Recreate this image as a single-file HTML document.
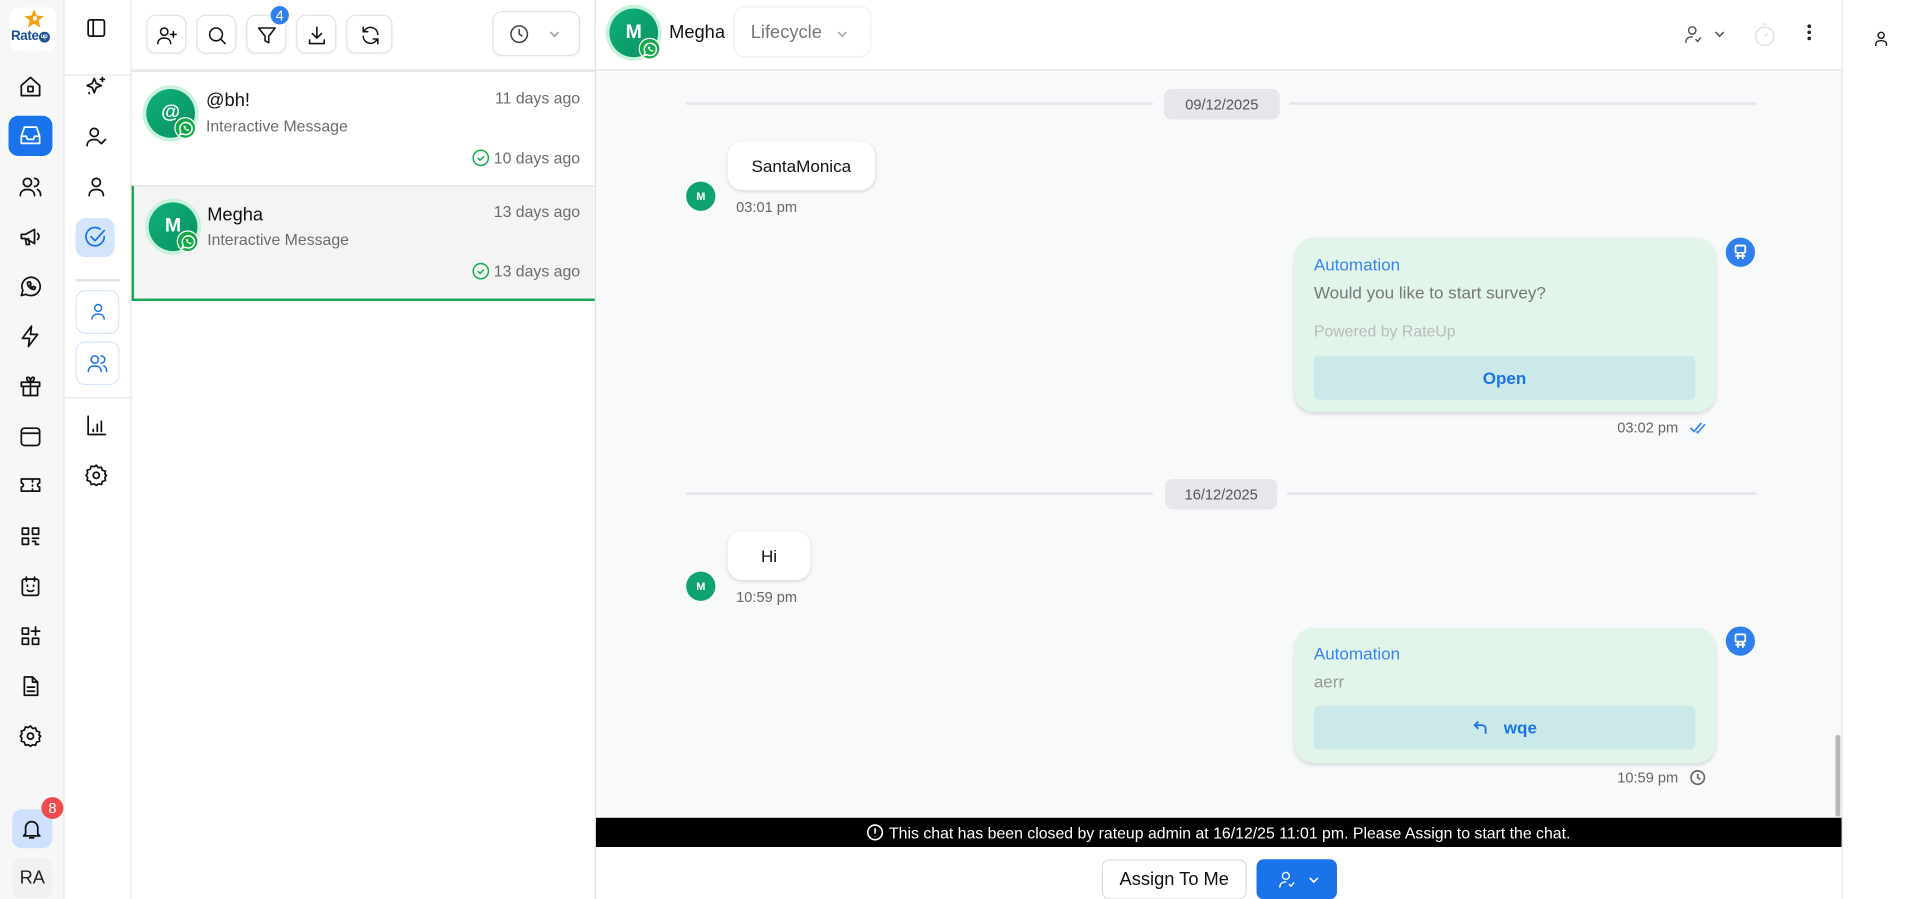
<!DOCTYPE html>
<html><head><meta charset="utf-8">
<style>
*{box-sizing:border-box;margin:0;padding:0}
html,body{width:1911px;height:899px;overflow:hidden;background:#fff;font-family:"Liberation Sans",Arial,sans-serif}
#w{position:absolute;left:0;top:0;width:1568px;height:738px;transform:scale(1.21875);transform-origin:0 0}
.a{position:absolute}
svg{display:block}
.ic{position:absolute;width:20px;height:20px;fill:none;stroke:#111;stroke-width:1.7;stroke-linecap:round;stroke-linejoin:round}
.btn{position:absolute;top:12px;width:33px;height:32px;border:1px solid #e3e3e3;border-radius:8px;background:#fff;box-shadow:0 1px 2px rgba(0,0,0,.05)}
.btn svg{position:absolute;left:7px;top:7px;width:18px;height:18px;fill:none;stroke:#111;stroke-width:1.7;stroke-linecap:round;stroke-linejoin:round}
.av{position:absolute;border-radius:50%;background:linear-gradient(135deg,#0fb07a,#0a9060);color:#fff;font-weight:bold;display:flex;align-items:center;justify-content:center;box-shadow:0 0 0 3px #c9f2dc}
.wa{position:absolute;width:18px;height:18px;border-radius:50%;background:#14a84a;border:1.5px solid #fff}
.wa svg{width:15px;height:15px;margin:0.5px}
.gray{color:#6b6b6b}
.card{position:absolute;left:1062px;width:346px;background:#e1f5ea;border-radius:16px;box-shadow:0 2px 3px rgba(0,0,0,.12)}
.auto{position:absolute;left:16px;color:#3b82f6;font-size:14px}
.cbtn{position:absolute;left:16px;width:313px;height:36px;background:#cce9e9;border-radius:4px;color:#1a73e8;font-weight:bold;font-size:14px;display:flex;align-items:center;justify-content:center}
.robot{position:absolute;width:24px;height:24px;border-radius:50%;background:#2f80ed}
.pill{position:absolute;height:25px;background:#e5e7eb;border-radius:6px;color:#555;font-size:12px;display:flex;align-items:center;justify-content:center}
.hl{position:absolute;height:2px;background:#e2e4e8}
.bub{position:absolute;left:597px;height:40px;background:#fff;border-radius:12px;box-shadow:0 1px 3px rgba(0,0,0,.15);font-size:14px;color:#111;display:flex;align-items:center;justify-content:center}
.sm{position:absolute;width:24px;height:24px;border-radius:50%;background:#0ea371;color:#fff;font-size:9px;font-weight:bold;display:flex;align-items:center;justify-content:center}
.t{position:absolute;font-size:12px;color:#666}
</style></head><body><div id="w">

<!-- rail 1 -->
<div class="a" style="left:0;top:0;width:53px;height:738px;background:#f7f7f7;border-right:1px solid #e6e6e6"></div>
<div class="a" style="left:8px;top:6px;width:38px;height:36px;background:#fff;border-radius:8px">
 <svg class="a" style="left:11px;top:1px" width="18" height="16" viewBox="0 0 24 22"><path d="M12 1l3 7 8 .5-6 5 2 8-7-4.5-7 4.5 2-8-6-5 8-.5z" fill="#f59e0b"/><circle cx="13" cy="11" r="2.5" fill="#fff"/></svg>
 <div class="a" style="left:1px;top:18px;font-size:11px;color:#1e4f91;font-weight:bold;letter-spacing:-.3px">Rate<span style="display:inline-block;width:9px;height:9px;border-radius:50%;background:#1e4f91;color:#fff;font-size:5px;text-align:center;line-height:9px;vertical-align:middle">up</span></div>
</div>
<svg class="ic" style="left:15px;top:61px" viewBox="0 0 24 24"><path d="M3 11l9-8 9 8v10H3z"/><rect x="9.5" y="12" width="5" height="5"/></svg>
<div class="a" style="left:7px;top:95px;width:36px;height:33px;background:#1a73e8;border-radius:8px"></div>
<svg class="ic" style="left:15px;top:101px;stroke:#fff" viewBox="0 0 24 24"><path d="M3 13l3-9h12l3 9v7H3z"/><path d="M3 13h5l1 3h6l1-3h5"/></svg>
<svg class="ic" style="left:15px;top:143px" viewBox="0 0 24 24"><circle cx="9" cy="8" r="4"/><path d="M2 21c0-4 3-6 7-6s7 2 7 6"/><path d="M16 4a4 4 0 010 8M19 15c2 1 3 3 3 6"/></svg>
<svg class="ic" style="left:15px;top:184px" viewBox="0 0 24 24"><path d="M3 10v4h4l9 5V5L7 10z"/><path d="M7 14l1 6h3l-1-6M19 9a4 4 0 010 6"/></svg>
<svg class="ic" style="left:15px;top:225px" viewBox="0 0 24 24"><path d="M3 21l1.5-5A9 9 0 1112 21a9 9 0 01-4.5-1.2z"/><path d="M9 8c0 4 3 7 7 7l1-2-2-1-1 1c-1-.5-2-1.5-2.5-2.5l1-1-1-2z"/></svg>
<svg class="ic" style="left:15px;top:266px" viewBox="0 0 24 24"><path d="M13 2L4 14h7l-1 8 9-12h-7z"/></svg>
<svg class="ic" style="left:15px;top:307px" viewBox="0 0 24 24"><rect x="3" y="8" width="18" height="4"/><path d="M5 12v9h14v-9M12 8v13M12 8C9 8 7 3 9.5 3S12 8 12 8s0-5 2.5-5S15 8 12 8"/></svg>
<svg class="ic" style="left:15px;top:348px" viewBox="0 0 24 24"><rect x="3" y="4" width="18" height="17" rx="3"/><path d="M3 9h18"/></svg>
<svg class="ic" style="left:15px;top:388px" viewBox="0 0 24 24"><path d="M3 6h18v4a2 2 0 000 4v4H3v-4a2 2 0 000-4z"/><path d="M14 7v2M14 12v1M14 16v1"/></svg>
<svg class="ic" style="left:15px;top:430px" viewBox="0 0 24 24"><rect x="4" y="4" width="6" height="6"/><rect x="14" y="4" width="6" height="6"/><rect x="4" y="14" width="6" height="6"/><path d="M14 14h6M14 17h3v3h3"/></svg>
<svg class="ic" style="left:15px;top:471px" viewBox="0 0 24 24"><rect x="4" y="5" width="16" height="16" rx="2"/><path d="M8 3v4M16 3v4M9 16c2 1.5 4 1.5 6 0M9 11v1M15 11v1"/></svg>
<svg class="ic" style="left:15px;top:512px" viewBox="0 0 24 24"><rect x="4" y="4" width="6" height="6"/><rect x="4" y="14" width="6" height="6"/><rect x="14" y="14" width="6" height="6"/><path d="M17 3v8M13 7h8"/></svg>
<svg class="ic" style="left:15px;top:553px" viewBox="0 0 24 24"><path d="M6 3h8l5 5v13H6z"/><path d="M14 3v5h5M9 13h7M9 17h7"/></svg>
<svg class="ic" style="left:15px;top:594px" viewBox="0 0 24 24"><circle cx="12" cy="12" r="3"/><path d="M12 2l2 2.5 3-.5 1 3 3 1-.5 3L22 12l-1.5 2 .5 3-3 1-1 3-3-.5L12 22l-2-1.5-3 .5-1-3-3-1 .5-3L2 12l1.5-2L3 7l3-1 1-3 3 .5z"/></svg>
<div class="a" style="left:10px;top:664px;width:33px;height:32px;background:#cfe0ff;border-radius:8px"></div>
<svg class="ic" style="left:16px;top:670px" viewBox="0 0 24 24"><path d="M6 17V11a6 6 0 0112 0v6l2 2H4zM10 21h4"/></svg>
<div class="a" style="left:34px;top:654px;width:18px;height:18px;border-radius:50%;background:#f04b4b;color:#fff;font-size:12px;text-align:center;line-height:18px">8</div>
<div class="a" style="left:10px;top:704px;width:33px;height:33px;background:#f1f1f1;border-radius:8px;font-size:15px;color:#222;text-align:center;line-height:33px">RA</div>

<!-- rail 2 -->
<div class="a" style="left:53px;top:0;width:55px;height:738px;background:#fff;border-right:1px solid #e6e6e6"></div>
<div class="a" style="left:53px;top:61px;width:54px;height:1px;background:#e6e6e6"></div>
<svg class="ic" style="left:69px;top:13px" viewBox="0 0 24 24"><rect x="4" y="4" width="16" height="16" rx="2"/><path d="M9 4v16"/></svg>
<svg class="ic" style="left:69px;top:61px" viewBox="0 0 24 24"><path d="M10 4l2 5 5 2-5 2-2 5-2-5-5-2 5-2z"/><path d="M18 3v4M16 5h4M5 18v1"/></svg>
<svg class="ic" style="left:69px;top:102px" viewBox="0 0 24 24"><circle cx="10" cy="8" r="4"/><path d="M3 21c0-4 3-6 7-6 2 0 3 .4 4 1M15 17l2 2 4-4"/></svg>
<svg class="ic" style="left:69px;top:143px" viewBox="0 0 24 24"><circle cx="12" cy="8" r="4"/><path d="M5 21c0-4 3-6 7-6s7 2 7 6"/></svg>
<div class="a" style="left:62px;top:179px;width:32px;height:32px;background:#d4e4fb;border-radius:8px"></div>
<svg class="ic" style="left:68px;top:185px;stroke:#1a73e8" viewBox="0 0 24 24"><path d="M21 11a9 9 0 11-4-7.5"/><path d="M8 11l4 4 9-10"/></svg>
<div class="a" style="left:62px;top:229px;width:36px;height:2px;background:#e2e2e2"></div>
<div class="a" style="left:62px;top:238px;width:36px;height:36px;border:1px solid #d8e6fb;border-radius:8px"></div>
<svg class="ic" style="left:72px;top:247px;width:17px;height:17px;stroke:#1a73e8" viewBox="0 0 24 24"><circle cx="12" cy="8" r="4"/><path d="M5 21c0-4 3-6 7-6s7 2 7 6"/></svg>
<div class="a" style="left:62px;top:280px;width:36px;height:36px;border:1px solid #d8e6fb;border-radius:8px"></div>
<svg class="ic" style="left:71px;top:289px;width:18px;height:18px;stroke:#1a73e8" viewBox="0 0 24 24"><circle cx="9" cy="8" r="4"/><path d="M2 21c0-4 3-6 7-6s7 2 7 6"/><path d="M16 4a4 4 0 010 8M19 15c2 1 3 3 3 6"/></svg>
<div class="a" style="left:53px;top:326px;width:54px;height:1px;background:#e6e6e6"></div>
<svg class="ic" style="left:69px;top:339px" viewBox="0 0 24 24"><path d="M4 3v18h17M9 16v2M13 11v7M17 8v10"/></svg>
<svg class="ic" style="left:69px;top:380px" viewBox="0 0 24 24"><circle cx="12" cy="12" r="3"/><path d="M12 2l2 2.5 3-.5 1 3 3 1-.5 3L22 12l-1.5 2 .5 3-3 1-1 3-3-.5L12 22l-2-1.5-3 .5-1-3-3-1 .5-3L2 12l1.5-2L3 7l3-1 1-3 3 .5z"/></svg>

<!-- list -->
<div class="a" style="left:108px;top:0;width:381px;height:738px;background:#fff;border-right:1px solid #e2e2e2"></div>
<div class="btn" style="left:120px"><svg viewBox="0 0 24 24"><circle cx="9" cy="8" r="4"/><path d="M2 21c0-4 3-6 7-6s7 2 7 6M19 8v6M16 11h6"/></svg></div>
<div class="btn" style="left:161px"><svg viewBox="0 0 24 24"><circle cx="11" cy="11" r="7"/><path d="M16 16l5 5"/></svg></div>
<div class="btn" style="left:202px"><svg viewBox="0 0 24 24"><path d="M3 4h18l-7 9v7l-4-2v-5z"/></svg></div>
<div class="a" style="left:221px;top:4px;width:17px;height:17px;border-radius:50%;background:#2f80ed;color:#fff;font-size:12px;text-align:center;line-height:17px;border:1px solid #fff">4</div>
<div class="btn" style="left:243px"><svg viewBox="0 0 24 24"><path d="M12 3v12M7 10l5 5 5-5M4 17v4h16v-4"/></svg></div>
<div class="btn" style="left:284px;width:38px"><svg style="left:10px" viewBox="0 0 24 24"><path d="M20 11a8 8 0 00-14-5L4 8M4 3v5h5M4 13a8 8 0 0014 5l2-2M20 21v-5h-5"/></svg></div>
<div class="a" style="left:404px;top:9px;width:72px;height:37px;border:1px solid #e3e3e3;border-radius:8px;box-shadow:0 1px 2px rgba(0,0,0,.04)">
 <svg class="a" style="left:12px;top:9px;width:18px;height:18px;fill:none;stroke:#444;stroke-width:1.7;stroke-linecap:round" viewBox="0 0 24 24"><circle cx="12" cy="12" r="9"/><path d="M12 7v5l3 2"/></svg>
 <svg class="a" style="left:45px;top:13px;width:10px;height:10px;fill:none;stroke:#aaa;stroke-width:2" viewBox="0 0 12 12"><path d="M2 4l4 4 4-4"/></svg>
</div>
<div class="a" style="left:108px;top:57px;width:380px;height:2px;background:#e6e6e6"></div>
<!-- item1 -->
<div class="av" style="left:120px;top:73px;width:40px;height:40px;font-size:16px">@</div>
<div class="wa" style="left:143px;top:96px"><svg viewBox="0 0 24 24" fill="none" stroke="#fff" stroke-width="2"><path d="M4 20l1.2-4A8 8 0 1112 20a8 8 0 01-4-1z"/><path d="M9 8.5c0 3.5 3 6.5 6.5 6.5l.8-1.6-1.8-.9-.9.9c-1-.5-2-1.4-2.4-2.4l.9-.9-.9-1.8z" fill="#fff" stroke="none"/></svg></div>
<div class="a" style="left:169px;top:74px;font-size:15px;color:#111">@bh!</div>
<div class="a gray" style="left:169px;top:96px;font-size:13px">Interactive Message</div>
<div class="a gray" style="left:400px;top:73px;width:76px;text-align:right;font-size:13px">11 days ago</div>
<svg class="a" style="left:387px;top:122px;width:15px;height:15px;fill:none;stroke:#16b04f;stroke-width:2" viewBox="0 0 24 24"><circle cx="12" cy="12" r="10"/><path d="M8 12l3 3 5-5"/></svg>
<div class="a gray" style="left:400px;top:122px;width:76px;text-align:right;font-size:13px">10 days ago</div>
<div class="a" style="left:108px;top:152px;width:380px;height:95px;background:#f4f4f4;border-left:2px solid #1aa354;border-bottom:2px solid #1aa354;border-top:1px solid #e2e2e2"></div>
<div class="av" style="left:122px;top:166px;width:40px;height:40px;font-size:16px">M</div>
<div class="wa" style="left:145px;top:189px"><svg viewBox="0 0 24 24" fill="none" stroke="#fff" stroke-width="2"><path d="M4 20l1.2-4A8 8 0 1112 20a8 8 0 01-4-1z"/><path d="M9 8.5c0 3.5 3 6.5 6.5 6.5l.8-1.6-1.8-.9-.9.9c-1-.5-2-1.4-2.4-2.4l.9-.9-.9-1.8z" fill="#fff" stroke="none"/></svg></div>
<div class="a" style="left:170px;top:168px;font-size:15px;color:#111">Megha</div>
<div class="a gray" style="left:170px;top:189px;font-size:13px">Interactive Message</div>
<div class="a gray" style="left:400px;top:166px;width:76px;text-align:right;font-size:13px">13 days ago</div>
<svg class="a" style="left:387px;top:215px;width:15px;height:15px;fill:none;stroke:#16b04f;stroke-width:2" viewBox="0 0 24 24"><circle cx="12" cy="12" r="10"/><path d="M8 12l3 3 5-5"/></svg>
<div class="a gray" style="left:400px;top:215px;width:76px;text-align:right;font-size:13px">13 days ago</div>

<!-- chat -->
<div class="a" style="left:489px;top:0;width:1022px;height:58px;background:#fff;border-bottom:1px solid #e2e2e2"></div>
<div class="av" style="left:500px;top:7px;width:40px;height:40px;font-size:16px">M</div>
<div class="wa" style="left:524px;top:31px"><svg viewBox="0 0 24 24" fill="none" stroke="#fff" stroke-width="2"><path d="M4 20l1.2-4A8 8 0 1112 20a8 8 0 01-4-1z"/><path d="M9 8.5c0 3.5 3 6.5 6.5 6.5l.8-1.6-1.8-.9-.9.9c-1-.5-2-1.4-2.4-2.4l.9-.9-.9-1.8z" fill="#fff" stroke="none"/></svg></div>
<div class="a" style="left:549px;top:18px;font-size:15px;color:#111">Megha</div>
<div class="a" style="left:603px;top:6px;width:111px;height:40px;border-radius:8px;box-shadow:0 0 2px rgba(0,0,0,.12)"></div>
<div class="a" style="left:616px;top:18px;font-size:15px;color:#777">Lifecycle</div>
<svg class="a" style="left:686px;top:23px;width:10px;height:10px;fill:none;stroke:#aaa;stroke-width:1.6" viewBox="0 0 12 12"><path d="M2 4l4 4 4-4"/></svg>
<svg class="a" style="left:1381px;top:19px;width:18px;height:18px;fill:none;stroke:#555;stroke-width:1.6;stroke-linecap:round" viewBox="0 0 24 24"><circle cx="10" cy="8" r="4"/><path d="M3 21c0-4 3-6 7-6M14 18l2 2 3-4"/></svg>
<svg class="a" style="left:1406px;top:23px;width:10px;height:10px;fill:none;stroke:#555;stroke-width:1.6" viewBox="0 0 12 12"><path d="M2 4l4 4 4-4"/></svg>
<svg class="a" style="left:1438px;top:18px;width:20px;height:22px;fill:none;stroke:#e5e5e5;stroke-width:1.6" viewBox="0 0 24 26"><circle cx="12" cy="14" r="9"/><path d="M10 2h4M12 14l3-3"/></svg>
<div class="a" style="left:1483px;top:20px;width:3px;height:3px;background:#222;border-radius:50%;box-shadow:0 5px 0 #222,0 10px 0 #222"></div>
<div class="a" style="left:1511px;top:0;width:57px;height:738px;background:#fff;border-left:1px solid #e6e6e6"></div>
<svg class="a" style="left:1536px;top:24px;width:15px;height:15px;fill:none;stroke:#111;stroke-width:1.8" viewBox="0 0 24 24"><circle cx="12" cy="8" r="4"/><path d="M5 22v-3c0-2 2-4 7-4s7 2 7 4v3"/></svg>

<div class="a" style="left:489px;top:59px;width:1022px;height:612px;background:#f8f9fb"></div>
<div class="a" style="left:1506px;top:603px;width:4px;height:67px;background:#b8b8b8;border-radius:2px"></div>

<div class="hl" style="left:563px;top:84px;width:383px"></div>
<div class="hl" style="left:1058px;top:84px;width:383px"></div>
<div class="pill" style="left:955px;top:73px;width:95px">09/12/2025</div>
<div class="bub" style="width:121px;top:116px">SantaMonica</div>
<div class="sm" style="left:563px;top:149px">M</div>
<div class="t" style="left:604px;top:163px">03:01 pm</div>

<div class="card" style="top:195px;height:143px">
 <div class="auto" style="top:14px">Automation</div>
 <div class="a" style="left:16px;top:37px;font-size:14px;color:#777">Would you like to start survey?</div>
 <div class="a" style="left:16px;top:69px;font-size:13px;color:#bbb">Powered by RateUp</div>
 <div class="cbtn" style="top:97px">Open</div>
</div>
<div class="robot" style="left:1416px;top:195px"><svg style="margin:5px" width="14" height="14" viewBox="0 0 14 14" fill="none" stroke="#fff" stroke-width="1.5"><rect x="3" y="1.5" width="8" height="6" rx="1"/><path d="M5 7.5v5M9 7.5v5M3 10h8"/></svg></div>
<div class="t" style="left:1300px;top:344px;width:77px;text-align:right">03:02 pm</div>
<svg class="a" style="left:1386px;top:346px;width:14px;height:10px;fill:none;stroke:#3b82f6;stroke-width:1.4" viewBox="0 0 14 10"><path d="M1 5l3 3 6-7M6 8l1 1 6-7"/></svg>

<div class="hl" style="left:563px;top:404px;width:383px"></div>
<div class="hl" style="left:1056px;top:404px;width:385px"></div>
<div class="pill" style="left:956px;top:393px;width:92px">16/12/2025</div>
<div class="bub" style="width:68px;top:436px">Hi</div>
<div class="sm" style="left:563px;top:469px">M</div>
<div class="t" style="left:604px;top:483px">10:59 pm</div>

<div class="card" style="top:515px;height:111px">
 <div class="auto" style="top:13px">Automation</div>
 <div class="a" style="left:16px;top:36px;font-size:14px;color:#999">aerr</div>
 <div class="cbtn" style="top:64px"><svg width="14" height="14" viewBox="0 0 14 14" fill="none" stroke="#1a73e8" stroke-width="1.5" style="margin-right:12px"><path d="M5 2L2 5l3 3M2 5h6a3 3 0 013 3v4"/></svg>wqe</div>
</div>
<div class="robot" style="left:1416px;top:514px"><svg style="margin:5px" width="14" height="14" viewBox="0 0 14 14" fill="none" stroke="#fff" stroke-width="1.5"><rect x="3" y="1.5" width="8" height="6" rx="1"/><path d="M5 7.5v5M9 7.5v5M3 10h8"/></svg></div>
<div class="t" style="left:1300px;top:631px;width:77px;text-align:right">10:59 pm</div>
<svg class="a" style="left:1386px;top:631px;width:14px;height:14px;fill:none;stroke:#666;stroke-width:1.4" viewBox="0 0 14 14"><circle cx="7" cy="7" r="5.5"/><path d="M7 4v3l2 1.5"/></svg>

<div class="a" style="left:489px;top:671px;width:1022px;height:24px;background:#000;color:#fff;font-size:13px;display:flex;align-items:center;justify-content:center"><svg width="14" height="14" viewBox="0 0 14 14" fill="none" stroke="#fff" stroke-width="1.3" style="margin-right:4px"><circle cx="7" cy="7" r="6"/><path d="M7 3.5v4.5M7 10v.5"/></svg>This chat has been closed by rateup admin at 16/12/25 11:01 pm. Please Assign to start the chat.</div>
<div class="a" style="left:489px;top:695px;width:1022px;height:43px;background:#fff"></div>
<div class="a" style="left:904px;top:705px;width:119px;height:33px;border:1px solid #ddd;border-radius:6px;font-size:15px;color:#111;text-align:center;line-height:31px;background:#fff">Assign To Me</div>
<div class="a" style="left:1031px;top:705px;width:66px;height:33px;background:#1a73e8;border-radius:6px">
 <svg class="a" style="left:17px;top:8px;width:17px;height:17px;fill:none;stroke:#fff;stroke-width:1.6;stroke-linecap:round" viewBox="0 0 24 24"><circle cx="10" cy="8" r="4"/><path d="M3 21c0-4 3-6 7-6M14 18l2 2 3-4"/></svg>
 <svg class="a" style="left:42px;top:12px;width:10px;height:10px;fill:none;stroke:#fff;stroke-width:1.6" viewBox="0 0 12 12"><path d="M2 4l4 4 4-4"/></svg>
</div>
</div></body></html>
